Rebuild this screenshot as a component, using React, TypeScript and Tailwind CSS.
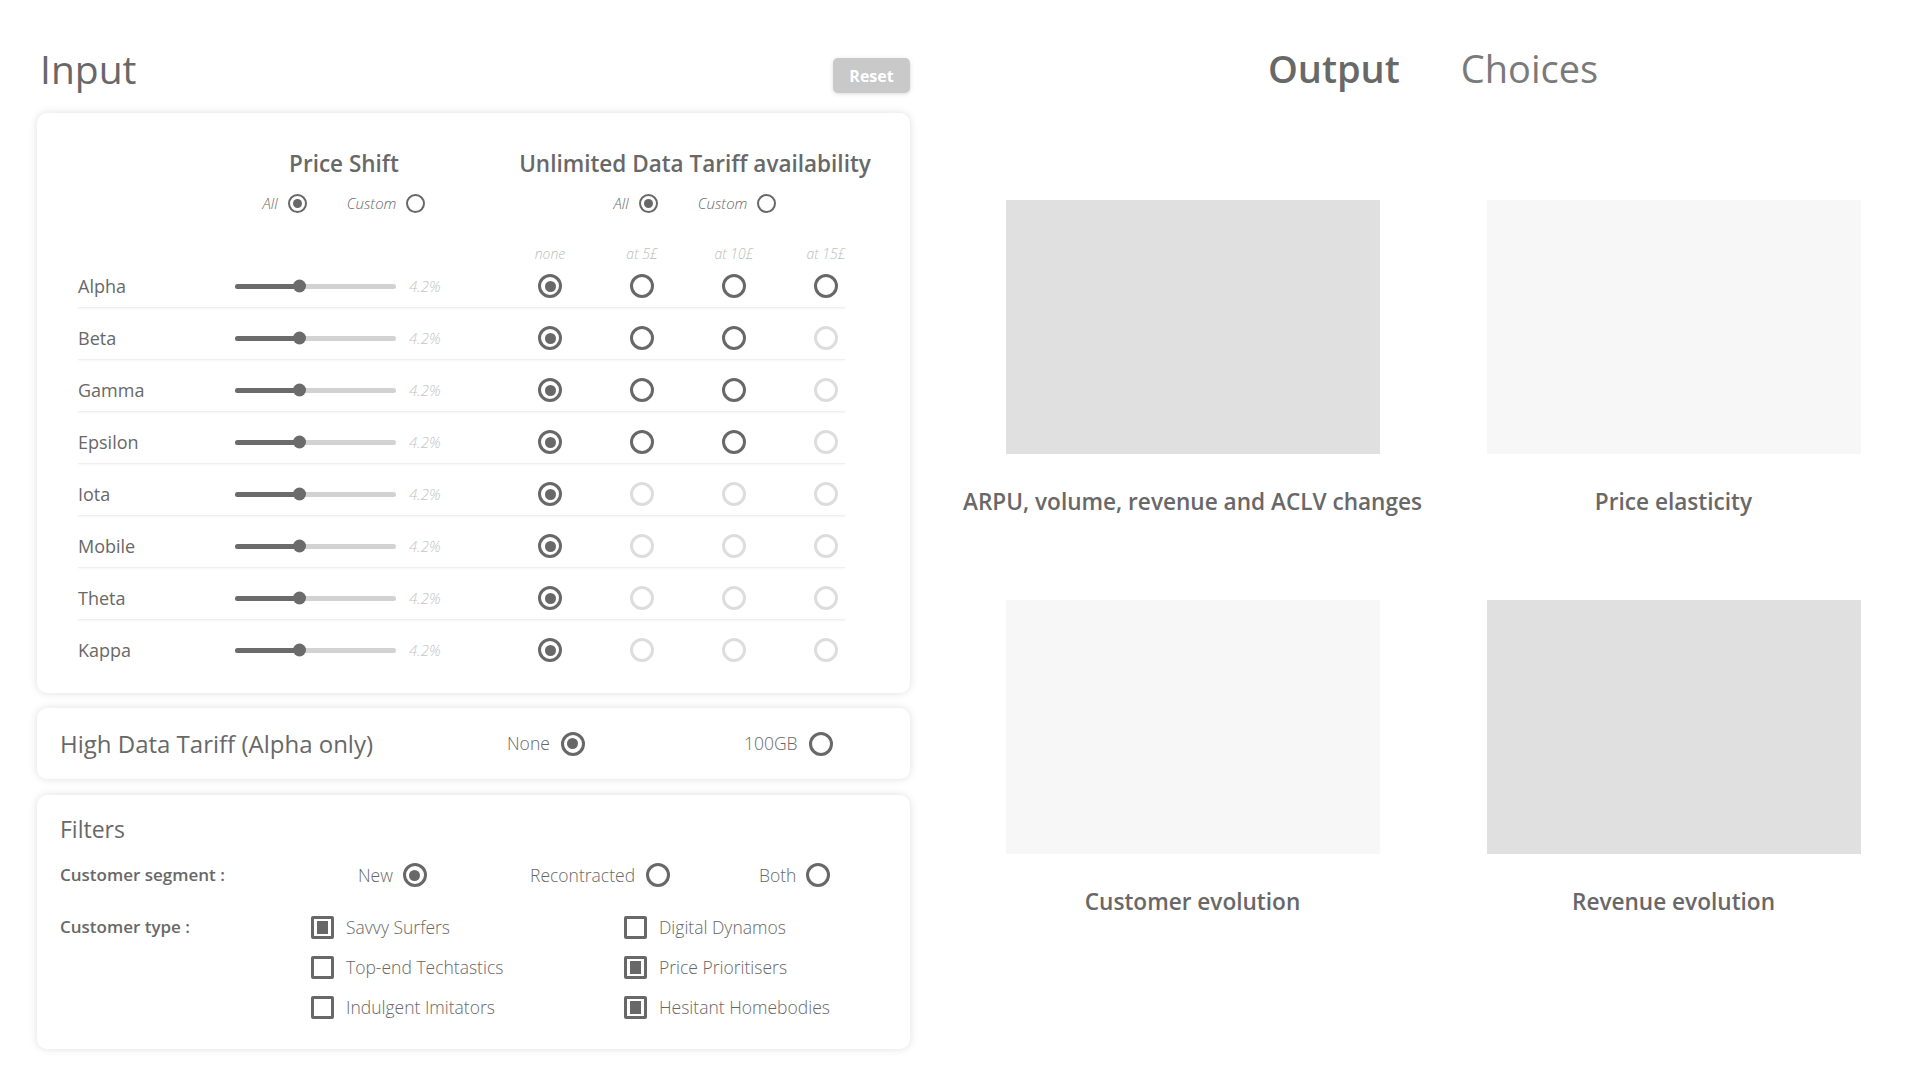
import React from 'react';

type RadioProps = { checked?: boolean; disabled?: boolean; small?: boolean };

const Radio: React.FC<RadioProps> = ({ checked, disabled, small }) => (
    <span
        className={`inline-flex shrink-0 items-center justify-center rounded-full ${small ? 'w-[19px] h-[19px] border-[2.5px]' : 'w-[24px] h-[24px] border-[3px]'} ${disabled ? 'border-[#dddddd]' : 'border-[#686868]'}`}
    >
        {checked && <span className={`rounded-full bg-[#686868] ${small ? 'w-[9px] h-[9px]' : 'w-[11px] h-[11px]'}`} />}
    </span>
);

const Checkbox: React.FC<{ checked?: boolean }> = ({ checked }) => (
    <span className="inline-flex shrink-0 items-center justify-center w-[23px] h-[23px] border-[3px] border-[#686868] rounded-[2px]">
        {checked && <span className="w-[11px] h-[13px] bg-[#686868]" />}
    </span>
);

const Slider: React.FC = () => (
    <div className="relative w-[161px] h-[5px] rounded-full bg-[#d2d2d2]">
        <div className="absolute left-0 top-0 h-full w-[65px] rounded-full bg-[#6b6b6b]" />
        <div className="absolute left-[58px] top-1/2 -translate-y-1/2 w-[13px] h-[13px] rounded-full bg-[#6b6b6b]" />
    </div>
);

// tariff availability per row: 0 = selected, 1 = open, 2 = disabled
const rows: { name: string; tiers: number[] }[] = [
    { name: 'Alpha', tiers: [0, 1, 1, 1] },
    { name: 'Beta', tiers: [0, 1, 1, 2] },
    { name: 'Gamma', tiers: [0, 1, 1, 2] },
    { name: 'Epsilon', tiers: [0, 1, 1, 2] },
    { name: 'Iota', tiers: [0, 2, 2, 2] },
    { name: 'Mobile', tiers: [0, 2, 2, 2] },
    { name: 'Theta', tiers: [0, 2, 2, 2] },
    { name: 'Kappa', tiers: [0, 2, 2, 2] },
];

const tierLabels = ['none', 'at 5£', 'at 10£', 'at 15£'];

const charts = [
    { title: 'ARPU, volume, revenue and ACLV changes', shade: 'bg-[#e0e0e0]' },
    { title: 'Price elasticity', shade: 'bg-[#f7f7f7]' },
    { title: 'Customer evolution', shade: 'bg-[#f7f7f7]' },
    { title: 'Revenue evolution', shade: 'bg-[#e0e0e0]' },
];

const cardClass = 'bg-white rounded-[10px] shadow-[0_0_8px_rgba(0,0,0,0.13)]';

const AllCustom: React.FC = () => (
    <div className="mt-[14px] flex items-center italic text-[15px] font-light leading-[20px]">
        <span>All</span>
        <span className="ml-[10px] flex"><Radio small checked /></span>
        <span className="ml-[40px]">Custom</span>
        <span className="ml-[10px] flex"><Radio small /></span>
    </div>
);

const App: React.FC = () => {
    return (
        <div className="w-[1920px] h-[1080px] bg-white flex font-['Open_Sans',sans-serif] text-[#686868] overflow-hidden">
            {/* Input column */}
            <div className="w-[873px] ml-[37px] flex flex-col">
                <div className="h-[113px] flex justify-between">
                    <h1 className="mt-[49px] ml-[3px] text-[39px] leading-none">Input</h1>
                    <button className="mt-[58px] w-[77px] h-[35px] rounded-[5px] bg-[#c9c9c9] text-white text-[16px] font-bold shadow-[0_1px_4px_rgba(0,0,0,0.15)]">
                        Reset
                    </button>
                </div>

                <div className={`${cardClass} h-[580px] pt-[36px]`}>
                    <div className="flex">
                        <div className="ml-[198px] w-[218px] flex flex-col items-center">
                            <div className="text-[22.5px] font-semibold leading-[30px]">Price Shift</div>
                            <AllCustom />
                        </div>
                        <div className="ml-[50px] w-[384px] flex flex-col items-center">
                            <div className="text-[22.5px] font-semibold leading-[30px] whitespace-nowrap">Unlimited Data Tariff availability</div>
                            <AllCustom />
                        </div>
                    </div>

                    <div className="mt-[30px] flex h-[20px] items-center pl-[467px]">
                        {tierLabels.map(t => (
                            <div key={t} className="w-[92px] text-center italic font-light text-[14px] text-[#bdbdbd]">{t}</div>
                        ))}
                    </div>

                    <div className="mt-[2px] flex flex-col">
                        {rows.map((row, i) => (
                            <div key={row.name}>
                                <div className="h-[42px] flex items-center pl-[41px]">
                                    <div className="w-[157px] text-[18px]">{row.name}</div>
                                    <Slider />
                                    <div className="w-[108px] pl-[13px] italic font-light text-[15px] text-[#c4c4c4]">4.2%</div>
                                    {row.tiers.map((t, j) => (
                                        <div key={j} className="w-[92px] flex justify-center">
                                            <Radio checked={t === 0} disabled={t === 2} />
                                        </div>
                                    ))}
                                </div>
                                {i < rows.length - 1 && (
                                    <div className="ml-[41px] mr-[65px] h-px mb-[9px] bg-[#efefef] shadow-[0_1px_2px_rgba(0,0,0,0.05)]" />
                                )}
                            </div>
                        ))}
                    </div>
                </div>

                <div className={`${cardClass} mt-[15px] h-[71px] flex items-center pl-[23px]`}>
                    <div className="w-[447px] text-[24px]">High Data Tariff (Alpha only)</div>
                    <div className="w-[237px] flex items-center gap-[11px] text-[17.5px] font-light">
                        <span>None</span>
                        <Radio checked />
                    </div>
                    <div className="flex items-center gap-[11px] text-[17.5px] font-light">
                        <span>100GB</span>
                        <Radio />
                    </div>
                </div>

                <div className={`${cardClass} mt-[16px] h-[254px] pl-[23px] pt-[19px]`}>
                    <div className="text-[23px] leading-[30px]">Filters</div>
                    <div className="mt-[16px] flex items-center h-[30px]">
                        <div className="w-[298px] text-[17px] font-semibold">Customer segment :</div>
                        <div className="w-[172px] flex items-center gap-[10px] text-[17.5px] font-light">
                            <span>New</span>
                            <Radio checked />
                        </div>
                        <div className="w-[229px] flex items-center gap-[11px] text-[17.5px] font-light">
                            <span>Recontracted</span>
                            <Radio />
                        </div>
                        <div className="flex items-center gap-[10px] text-[17.5px] font-light">
                            <span>Both</span>
                            <Radio />
                        </div>
                    </div>
                    <div className="mt-[22px] flex">
                        <div className="w-[251px] text-[17px] font-semibold h-[30px] flex items-center">Customer type :</div>
                        <div className="grid grid-cols-[313px_auto] gap-y-[10px] text-[17.5px] font-light">
                            {[
                                ['Savvy Surfers', true],
                                ['Digital Dynamos', false],
                                ['Top-end Techtastics', false],
                                ['Price Prioritisers', true],
                                ['Indulgent Imitators', false],
                                ['Hesitant Homebodies', true],
                            ].map(([label, checked]) => (
                                <div key={label as string} className="h-[30px] flex items-center gap-[12px]">
                                    <Checkbox checked={checked as boolean} />
                                    <span>{label as string}</span>
                                </div>
                            ))}
                        </div>
                    </div>
                </div>
            </div>

            {/* Output column */}
            <div className="ml-[42px] w-[962px] flex flex-col">
                <div className="h-[200px] flex justify-center">
                    <div className="mt-[49px] flex items-baseline gap-[61px] leading-none">
                        <span className="font-semibold text-[38px]">Output</span>
                        <span className="text-[#7a7a7a] text-[38px]">Choices</span>
                    </div>
                </div>
                <div className="grid grid-cols-2">
                    {charts.map(c => (
                        <div key={c.title} className="h-[400px] flex flex-col items-center">
                            <div className={`w-[374px] h-[254px] ${c.shade}`} />
                            <div className="mt-[33px] text-[22.6px] font-semibold leading-[30px] whitespace-nowrap">{c.title}</div>
                        </div>
                    ))}
                </div>
            </div>
        </div>
    );
};

export default App;
